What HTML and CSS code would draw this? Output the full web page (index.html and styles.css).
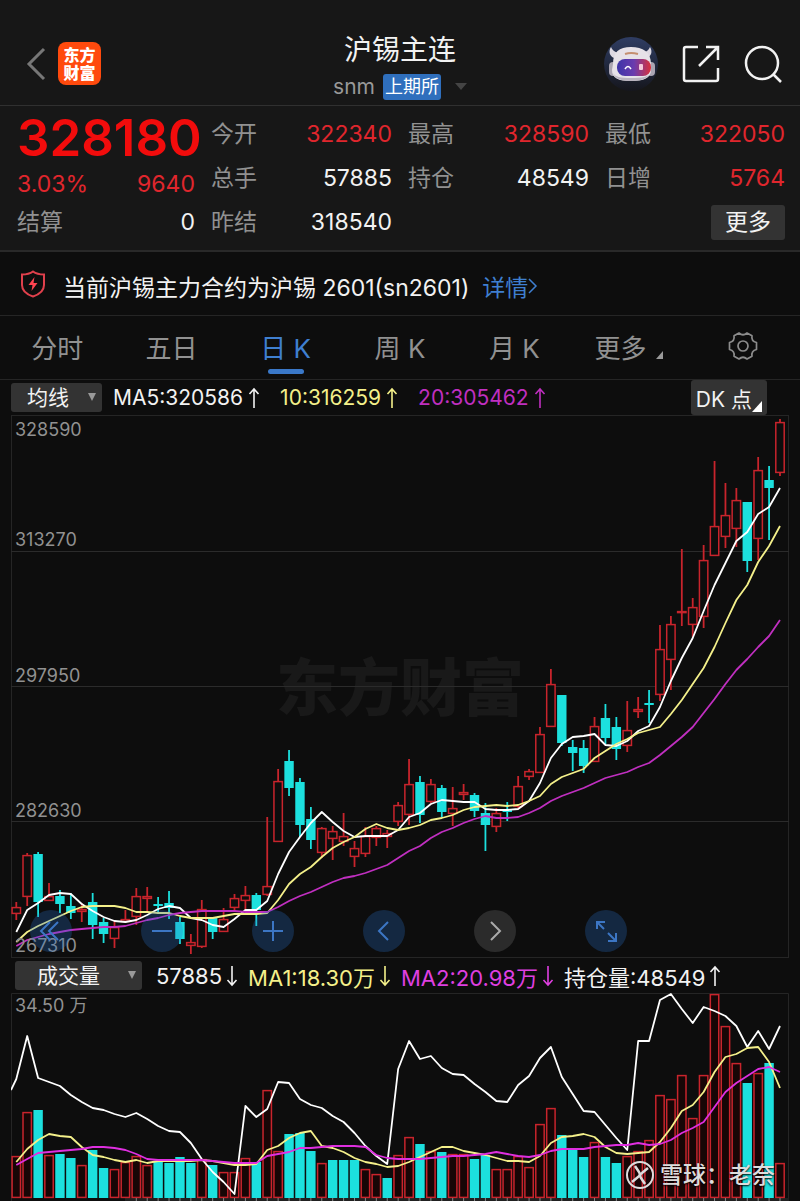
FILE: index.html
```html
<!DOCTYPE html>
<html lang="zh-CN">
<head>
    <meta charset="UTF-8">
    <meta name="viewport" content="width=device-width, initial-scale=1.0">
    <title>沪锡主连</title>
    <link rel="stylesheet" href="styles.css">
</head>
<body>
    <svg class="defs" aria-hidden="true">
        <symbol id="arrow-up" viewBox="0 0 12 22">
            <path d="M6 21V2M1.5 7L6 2l4.5 5" fill="none" stroke="currentColor" stroke-width="1.6"/>
        </symbol>
        <symbol id="arrow-down" viewBox="0 0 12 22">
            <path d="M6 1v19M1.5 15L6 20l4.5-5" fill="none" stroke="currentColor" stroke-width="1.6"/>
        </symbol>
    </svg>

    <header>
        <div class="header-left">
            <button class="icon-btn" aria-label="返回">
                <svg width="20" height="34" viewBox="0 0 20 34"><path d="M18 2L3 17l15 15" fill="none" stroke="#777" stroke-width="3"/></svg>
            </button>
            <div class="logo"><span>东方</span><span>财富</span></div>
        </div>
        <div class="header-title">
            <h1>沪锡主连</h1>
            <div class="sub">
                <span>snm</span>
                <span class="tag">上期所</span>
                <svg width="12" height="7" viewBox="0 0 12 7"><path d="M0 0h12L6 7z" fill="#444"/></svg>
            </div>
        </div>
        <div class="header-right">
            <button class="icon-btn" aria-label="智能助手">
                <svg width="54" height="54" viewBox="0 0 54 54">
                    <defs>
                        <linearGradient id="visor" x1="0" y1="0" x2="1" y2="0">
                            <stop offset="0" stop-color="#3d34a8"/>
                            <stop offset=".5" stop-color="#6a3cae"/>
                            <stop offset="1" stop-color="#d8303c"/>
                        </linearGradient>
                        <linearGradient id="sky" x1="0" y1="0" x2="0" y2="1">
                            <stop offset="0" stop-color="#2f3d63"/>
                            <stop offset="1" stop-color="#15161d"/>
                        </linearGradient>
                    </defs>
                    <circle cx="27" cy="27" r="27" fill="url(#sky)"/>
                    <path d="M7 10c-3 5-1 9 3 11l7-5c-5 0-8-2-10-6zM46 10c3 5 1 9-3 11l-7-5c5 0 8-2 10-6z" fill="#ddd9e2"/>
                    <rect x="5" y="25" width="8" height="14" rx="4" fill="#aaa5b2"/>
                    <rect x="43" y="25" width="8" height="14" rx="4" fill="#aaa5b2"/>
                    <path d="M9 27c0-12 6-17 18-17s20 5 20 17v6c0 8-7 11-20 11S8 41 8 33z" fill="#e6e2e8"/>
                    <path d="M9 36c2 6 9 8 18 8s17-2 19-8c-1 4-8 5-19 5s-16-1-18-5z" fill="#b9b3bf"/>
                    <rect x="13" y="22" width="34" height="17" rx="8" fill="url(#visor)"/>
                    <path d="M21 17q6-2 13 0" fill="none" stroke="#c48f70" stroke-width="2"/>
                    <path d="M21 32q3-5 6 0" fill="none" stroke="#fff" stroke-width="1.5"/>
                    <rect x="35" y="27" width="4" height="6" rx="1" fill="#f3c8d9"/>
                </svg>
            </button>
            <button class="icon-btn" aria-label="分享">
                <svg width="38" height="38" viewBox="0 0 38 38" fill="none" stroke="#f2f2f2" stroke-width="2.5">
                    <path d="M16 2H4q-2 0-2 2v30q0 2 2 2h30q2 0 2-2V23"/><path d="M17 21L36 2M24 2h12v13"/>
                </svg>
            </button>
            <button class="icon-btn" aria-label="搜索">
                <svg width="38" height="38" viewBox="0 0 38 38" fill="none" stroke="#f2f2f2" stroke-width="2.5">
                    <circle cx="18" cy="18" r="16"/><path d="M29 29l8 8"/>
                </svg>
            </button>
        </div>
    </header>

    <section class="quote">
        <div class="quote-main">
            <div class="price">328180</div>
            <div class="cell change"><span class="red">3.03%</span><span class="red">9640</span></div>
            <div class="cell"><span class="label">结算</span><span>0</span></div>
        </div>
        <div>
            <div class="cell"><span class="label">今开</span><span class="red">322340</span></div>
            <div class="cell"><span class="label">总手</span><span>57885</span></div>
            <div class="cell"><span class="label">昨结</span><span>318540</span></div>
        </div>
        <div>
            <div class="cell"><span class="label">最高</span><span class="red">328590</span></div>
            <div class="cell"><span class="label">持仓</span><span>48549</span></div>
        </div>
        <div>
            <div class="cell"><span class="label">最低</span><span class="red">322050</span></div>
            <div class="cell"><span class="label">日增</span><span class="red">5764</span></div>
            <div class="cell cell-end"><button class="more-btn">更多</button></div>
        </div>
    </section>

    <div class="notice">
        <svg width="26" height="28" viewBox="0 0 26 28">
            <path d="M13 1.5C9.5 4 6 4.5 2 4.5V15c0 6 5 9.5 11 11.5 6-2 11-5.5 11-11.5V4.5c-4 0-7.5-.5-11-3z" fill="none" stroke="#e0404c" stroke-width="2"/>
            <path d="M14.5 7L8.5 15h4l-1 6 6-8h-4z" fill="#ff4450"/>
        </svg>
        <span>当前沪锡主力合约为沪锡 2601(sn2601)</span>
        <a href="#">详情<svg width="10" height="16" viewBox="0 0 10 16"><path d="M1 1l7 7-7 7" fill="none" stroke="currentColor" stroke-width="1.5"/></svg></a>
    </div>

    <nav class="tabs">
        <button>分时</button>
        <button>五日</button>
        <button class="active">日 K</button>
        <button>周 K</button>
        <button>月 K</button>
        <button class="tab-more">更多<svg width="7" height="8" viewBox="0 0 7 8"><path d="M7 0v8H0z" fill="#999"/></svg></button>
        <button aria-label="设置">
            <svg width="30" height="30" viewBox="0 0 30 30" fill="none" stroke="#8c8c8c" stroke-width="1.7" stroke-linejoin="round">
                <path d="M11 2Q15 5.5 19 2L24 4.8Q23 10 28.5 11.5V18.5Q23 20 24 25.2L19 28Q15 24.5 11 28L6 25.2Q7 20 1.5 18.5V11.5Q7 10 6 4.8Z"/>
                <circle cx="15" cy="15" r="5"/>
            </svg>
        </button>
    </nav>

    <div class="bar ma-bar">
        <label class="picker"><select aria-label="主图指标"><option>均线</option></select></label>
        <span>MA5:320586<svg class="arrow"><use href="#arrow-up"/></svg></span>
        <span class="yellow">10:316259<svg class="arrow"><use href="#arrow-up"/></svg></span>
        <span class="purple">20:305462<svg class="arrow"><use href="#arrow-up"/></svg></span>
        <button class="dk-btn">DK 点<svg width="10" height="11" viewBox="0 0 10 11"><path d="M10 0v11H0z" fill="#fff"/></svg></button>
    </div>

    <div class="chart">
        <svg id="kline" viewBox="11 415 778 543"></svg>
        <div class="chart-tools">
            <button aria-label="最左"><svg viewBox="0 0 42 42"><path d="M20 12l-9 9 9 9M28 12l-9 9 9 9"/></svg></button>
            <button aria-label="缩小"><svg viewBox="0 0 42 42"><path d="M11 21h20"/></svg></button>
            <button aria-label="放大"><svg viewBox="0 0 42 42"><path d="M11 21h20M21 11v20"/></svg></button>
            <button aria-label="左移"><svg viewBox="0 0 42 42"><path d="M25 12l-9 9 9 9"/></svg></button>
            <button class="disabled" aria-label="右移"><svg viewBox="0 0 42 42"><path d="M17 12l9 9-9 9"/></svg></button>
            <button aria-label="全屏"><svg viewBox="0 0 42 42"><path d="M19 19l-7-7M12 19v-7h8M23 23l8 8M31 23v8h-8"/></svg></button>
        </div>
    </div>

    <div class="bar vol-bar">
        <label class="picker picker-vol"><select aria-label="副图指标"><option>成交量</option></select></label>
        <span>57885<svg class="arrow"><use href="#arrow-down"/></svg></span>
        <span class="yellow">MA1:18.30万<svg class="arrow"><use href="#arrow-down"/></svg></span>
        <span class="purple-light">MA2:20.98万<svg class="arrow"><use href="#arrow-down"/></svg></span>
        <span>持仓量:48549<svg class="arrow"><use href="#arrow-up"/></svg></span>
    </div>

    <div class="chart">
        <svg id="volume" viewBox="11 993 778 208"></svg>
        <div class="watermark">
            <svg width="28" height="28" viewBox="0 0 28 28" fill="none" stroke="currentColor" stroke-width="2">
                <circle cx="14" cy="14" r="13"/>
                <path d="M9 5l4 6q2 3-1 5l-6 5M19 23l-4-6q-2-3 1-5l6-5" stroke-width="2.5"/>
            </svg>
            <span>雪球：老奈</span>
        </div>
    </div>

    <script src="script.js"></script>
</body>
</html>
```
FILE: styles.css
```css
* {
    box-sizing: border-box;
}

body {
    margin: 0;
    background-color: #0d0d0d;
    color: #f2f2f2;
    font-family: Inter, "Noto Sans CJK SC", sans-serif;
    font-size: 23px;
    font-weight: 400;
    overflow-x: hidden;
}

button, select {
    font: inherit;
    color: inherit;
    background: none;
    border: none;
    padding: 0;
    margin: 0;
    cursor: pointer;
}

svg {
    display: block;
}

.defs {
    position: absolute;
    width: 0;
    height: 0;
}

header {
    display: grid;
    grid-template-columns: 1fr auto 1fr;
    align-items: center;
    height: 106px;
    padding: 22px 18px 0;
    background-color: #171717;
    border-bottom: 1px solid #303030;
}

.header-left, .header-right, .sub {
    display: flex;
    align-items: center;
}

.header-left {
    gap: 12px;
    padding-left: 8px;
}

.header-right {
    justify-content: flex-end;
    gap: 24px;
}

.logo {
    display: flex;
    flex-direction: column;
    align-items: center;
    justify-content: center;
    width: 43px;
    height: 43px;
    border-radius: 8px;
    background-color: #ff4a0d;
    color: #fff;
    font-size: 16px;
    font-weight: 900;
    line-height: 18px;
}

.header-title {
    padding-top: 8px;
    text-align: center;
}

h1 {
    margin: 0;
    font-size: 28px;
    font-weight: 400;
    line-height: 38px;
}

.sub {
    justify-content: center;
    gap: 8px;
    height: 36px;
    color: #999;
    font-size: 21px;
}

.sub svg {
    margin-left: 6px;
}

.tag {
    padding: 0 2px;
    border-radius: 3px;
    background-color: #2f6fbd;
    color: #fff;
    font-size: 18px;
    line-height: 26px;
}

.quote {
    display: grid;
    grid-template-columns: minmax(0, 178fr) minmax(0, 181fr) minmax(0, 181fr) minmax(0, 180fr);
    gap: 16px;
    height: 146px;
    padding: 6px 15px 0 17px;
    background-color: #171717;
    border-bottom: 2px solid #292929;
}

.cell {
    display: flex;
    align-items: center;
    justify-content: space-between;
    height: 44px;
}

.price {
    height: 52px;
    color: #f20c0c;
    font-size: 51px;
    font-weight: 600;
    line-height: 52px;
}

.change {
    height: 40px;
}

.quote-main .cell:last-child {
    height: 36px;
}

.label {
    color: #919191;
    line-height: 28px;
}

.red {
    color: #e0262d;
}

.cell-end {
    justify-content: flex-end;
}

.more-btn {
    width: 74px;
    height: 35px;
    border-radius: 3px;
    background-color: #333;
    line-height: 33px;
}

.notice {
    display: flex;
    align-items: center;
    gap: 13px;
    height: 64px;
    padding: 4px 20px 0;
    border-bottom: 1px solid #252525;
}

.notice > svg {
    margin: 0 4px 4px 0;
}

.notice a {
    display: flex;
    align-items: center;
    color: #3f7fd0;
    text-decoration: none;
}

.tabs {
    display: grid;
    grid-template-columns: repeat(7, 1fr);
    height: 64px;
    border-bottom: 1px solid #252525;
}

.tabs button {
    position: relative;
    display: flex;
    align-items: center;
    justify-content: center;
    padding-bottom: 3px;
    color: #919191;
    font-size: 26px;
}

.tabs .active {
    color: #3f7fd0;
}

.tabs .active::after {
    content: "";
    position: absolute;
    bottom: 5px;
    width: 36px;
    height: 5px;
    border-radius: 3px;
    background-color: #3a78c8;
}

.tab-more svg {
    margin: 18px 0 0 9px;
}

.bar {
    display: flex;
    align-items: center;
    height: 35px;
    white-space: nowrap;
}

.bar > span {
    display: flex;
    align-items: center;
}

.ma-bar {
    gap: 20px;
    padding: 0 33px 0 11px;
    font-size: 21px;
}

.vol-bar {
    gap: 10px;
    padding: 0 15px;
    font-size: 22px;
}

.arrow {
    width: 12px;
    height: 22px;
    margin-left: 5px;
}

.vol-bar .arrow {
    margin-left: 4px;
}

.picker {
    position: relative;
    width: 91px;
    height: 29px;
    margin-right: -9px;
    border-radius: 3px;
    background-color: #333;
    font-size: 21px;
}

.picker::after {
    content: "";
    position: absolute;
    top: 10px;
    right: 6px;
    border: 4px solid transparent;
    border-top: 8px solid #999;
    border-bottom: 0;
    pointer-events: none;
}

.picker select {
    appearance: none;
    width: 100%;
    height: 29px;
    padding: 0 16px;
}

.picker-vol {
    width: 127px;
    margin-right: 4px;
}

.picker-vol select {
    padding: 0 22px;
}

.yellow {
    color: #f4f08a;
}

.purple {
    color: #c02fc0;
}

.purple-light {
    color: #df3fe0;
}

.dk-btn {
    display: flex;
    align-items: center;
    align-self: stretch;
    margin-left: auto;
    padding: 0 5px;
    border-radius: 3px;
    background-color: #333;
}

.dk-btn svg {
    margin-top: 18px;
}

.chart {
    position: relative;
    margin: 0 11px;
}

.chart > svg {
    width: 100%;
    height: auto;
}

.chart text {
    fill: #919191;
    font-size: 18px;
}

.chart .brand {
    fill: #191919;
    font-size: 62px;
    font-weight: 900;
}

.chart-tools {
    position: absolute;
    left: 19px;
    bottom: 6px;
    display: flex;
    gap: 69px;
}

.chart-tools button {
    width: 42px;
    height: 42px;
    border-radius: 50%;
    background-color: rgba(40, 110, 200, 0.28);
}

.chart-tools path {
    fill: none;
    stroke: #3c76c4;
    stroke-width: 2;
}

.chart-tools .disabled {
    background-color: #2b2b2b;
}

.chart-tools .disabled path {
    stroke: #aaa;
}

.watermark {
    position: absolute;
    right: 14px;
    bottom: 8px;
    display: flex;
    align-items: center;
    gap: 6px;
    color: #ddd;
    font-size: 23px;
    font-weight: 500;
    line-height: 36px;
    text-shadow: 0 1px 2px #000;
}
```
FILE: script.js
```js
const START = 16.3;
const STEP = 10.91;
const RED = '#c8242c';
const CYAN = '#1ce0de';

// [direction, high, body top, body bottom, low]
const candles = [
    ['r',902,907,914,920], ['r',853,855,897,906], ['c',852,854,902,917], ['r',883,896,901,901], ['c',890,896,904,913],
    ['c',893,906,913,919], ['r',903,909,912,922], ['c',893,902,925,939], ['c',918,922,934,943], ['r',921,927,939,948],
    ['r',910,919,922,923], ['r',888,896,917,925], ['r',887,896,899,912], ['c',897,904,906,914], ['c',891,903,908,919],
    ['c',917,922,939,944], ['r',934,942,946,954], ['r',900,909,947,948], ['c',917,918,932,939], ['r',908,919,932,932],
    ['r',894,898,908,912], ['r',886,895,901,910], ['c',893,895,910,926], ['r',817,886,895,896], ['r',769,781,842,842],
    ['c',750,761,788,796], ['c',778,782,825,837], ['c',807,819,840,849], ['r',827,828,853,858], ['r',826,831,839,860],
    ['r',813,836,842,846], ['r',841,848,857,867], ['r',827,836,854,857], ['r',826,828,838,846], ['r',830,833,837,848],
    ['r',802,805,822,826], ['r',759,784,815,825], ['c',776,782,815,823], ['r',779,784,802,803], ['c',785,788,812,817],
    ['r',787,808,814,826], ['r',784,792,795,800], ['c',793,795,811,817], ['c',803,813,825,851], ['r',808,813,827,832],
    ['c',802,809,812,821], ['r',776,786,807,808], ['r',769,771,777,780], ['r',727,734,773,773], ['r',669,684,727,727],
    ['c',695,695,743,746], ['c',740,747,753,771], ['c',740,748,766,773], ['r',717,726,762,762], ['c',704,718,738,744],
    ['c',717,727,749,760], ['r',701,730,746,752], ['r',697,709,712,718], ['c',690,703,705,723], ['r',625,649,695,701],
    ['r',616,624,660,690], ['r',549,611,613,626], ['r',598,607,625,637], ['r',545,560,617,628], ['r',461,526,556,556],
    ['r',483,515,537,548], ['r',488,500,529,547], ['c',502,502,561,572], ['r',457,470,539,560], ['c',466,480,488,540],
    ['r',419,422,473,476]
];

const ma5 = [932,910,903,895,893,894,904,911,917,921,922,920,915,909,906,908,918,920,925,927,919,910,910,901,874,852,837,823,812,822,831,837,836,836,836,830,817,813,804,800,801,802,802,809,810,810,809,801,783,758,744,737,736,734,745,746,741,731,726,707,681,658,638,611,585,563,541,532,514,507,488];
const ma10 = [942,932,926,921,916,911,907,906,906,906,908,912,912,913,913,916,918,918,918,916,914,914,914,913,900,884,874,867,857,848,842,837,829,824,828,830,828,825,820,818,815,810,807,806,805,806,805,801,796,784,777,773,769,758,751,744,739,733,730,727,714,700,684,668,647,623,600,585,562,546,526];
const ma20 = [946,940,937,934,932,930,929,928,927,927,926,923,920,918,915,913,912,911,911,911,911,912,912,912,907,901,896,892,887,882,878,876,873,869,865,858,851,846,838,832,828,823,819,816,818,818,817,813,808,801,796,792,788,783,778,775,772,767,763,755,746,737,727,713,699,684,670,659,647,636,620];

// direction + top of every volume bar
const volumes = 'r1156 r1112 c1110 r1155 c1154 c1158 r1165 c1150 c1168 r1169 r1162 r1156 r1165 c1162 c1163 c1157 c1163 r1159 c1165 r1172 r1172 r1158 c1162 r1090 r1151 c1134 c1133 c1151 r1163 c1160 c1160 c1160 r1169 r1174 c1178 r1155 r1137 c1144 r1151 c1152 r1154 r1154 c1159 c1155 r1169 r1169 r1156 r1167 r1124 r1108 c1135 c1150 c1157 r1142 c1157 c1163 r1156 r1151 r1140 r1095 r1099 r1075 r1118 r1075 r994 r1026 r1063 c1083 r1073 c1063 r1163'.split(' ');

const holding = [1079,1036,1078,1082,1086,1095,1102,1108,1110,1114,1117,1113,1119,1126,1131,1132,1143,1159,1172,1182,1194,1106,1117,1109,1082,1083,1099,1105,1108,1116,1122,1133,1146,1156,1164,1069,1041,1059,1056,1068,1074,1075,1084,1092,1101,1102,1085,1076,1058,1047,1077,1094,1111,1112,1125,1138,1150,1041,1041,1000,994,1009,1023,1007,1011,1016,1026,1047,1031,1049,1026];
const volMa1 = [1162,1149,1140,1134,1136,1137,1147,1155,1157,1160,1162,1160,1163,1161,1161,1161,1161,1160,1161,1163,1165,1165,1164,1150,1146,1138,1133,1131,1146,1148,1152,1158,1162,1164,1167,1166,1162,1157,1152,1147,1147,1151,1153,1155,1158,1161,1161,1162,1156,1143,1137,1136,1134,1137,1147,1153,1154,1153,1152,1142,1128,1111,1105,1092,1072,1057,1054,1048,1047,1062,1088];
const volMa2 = [1165,1159,1153,1152,1151,1150,1149,1147,1147,1148,1150,1154,1159,1160,1160,1160,1160,1160,1161,1162,1163,1163,1163,1156,1154,1152,1148,1148,1147,1146,1146,1146,1147,1155,1158,1159,1159,1159,1158,1157,1156,1156,1155,1154,1152,1154,1156,1157,1155,1151,1149,1149,1149,1147,1146,1145,1145,1143,1145,1144,1140,1133,1128,1122,1107,1092,1083,1076,1069,1067,1072];

function xAt(i) {
    return START + i * STEP;
}

function line(x1, y1, x2, y2, color, width) {
    return `<line x1="${x1}" y1="${y1}" x2="${x2}" y2="${y2}" stroke="${color}" stroke-width="${width}"/>`;
}

function curve(values, color, first = '') {
    const points = values.map((y, i) => `${xAt(i)},${y}`).join(' ');
    return `<polyline points="${first} ${points}" fill="none" stroke="${color}" stroke-width="1.8" stroke-linejoin="round"/>`;
}

function body(x, top, bottom, dir, fill) {
    if (dir === 'c') {
        return `<rect x="${x - 4.7}" y="${top}" width="9.4" height="${bottom - top}" fill="${CYAN}"/>`;
    }
    return `<rect x="${x - 4.2}" y="${top + 0.6}" width="8.4" height="${Math.max(bottom - top - 1.2, 1)}" fill="${fill}" stroke="${RED}" stroke-width="1.5"/>`;
}

function drawKline() {
    let html = '<text class="brand" x="276" y="711">东方财富</text>';
    html += '<rect x="11.5" y="415.5" width="777" height="542" fill="none" stroke="#252525"/>';
    [551.5, 686.5, 821.5].forEach(y => {
        html += line(11, y, 789, y, '#2b2b2b', 1);
    });
    candles.forEach(([dir, high, top, bottom, low], i) => {
        const x = xAt(i);
        const color = dir === 'c' ? CYAN : RED;
        html += line(x, high, x, top, color, 1.8) + line(x, bottom, x, low, color, 1.8);
        html += body(x, top, bottom, dir, '#0d0d0d');
    });
    html += curve(ma5, '#fff') + curve(ma10, '#f4f08a') + curve(ma20, '#c02fc0');
    [[328590, 436], [313270, 546], [297950, 682], [282630, 817], [267310, 952]].forEach(([price, y]) => {
        html += `<text x="15" y="${y}">${price}</text>`;
    });
    document.getElementById('kline').innerHTML = html;
}

function drawVolume() {
    let html = '<path d="M11.5 1201V993.5h777V1201" fill="none" stroke="#252525"/>';
    html += '<rect x="125" y="1198" width="664" height="3" fill="#202020"/>';
    volumes.forEach((item, i) => {
        html += body(xAt(i), Number(item.slice(1)), 1198, item[0], '#170606');
        if (i > 10) {
            html += line(xAt(i), 1198, xAt(i), 1201, '#888', 1);
        }
    });
    html += curve(holding, '#fff', '11,1090') + curve(volMa1, '#f4f08a') + curve(volMa2, '#df2fe0');
    html += '<text x="15" y="1012">34.50 万</text>';
    document.getElementById('volume').innerHTML = html;
}

drawKline();
drawVolume();
```
